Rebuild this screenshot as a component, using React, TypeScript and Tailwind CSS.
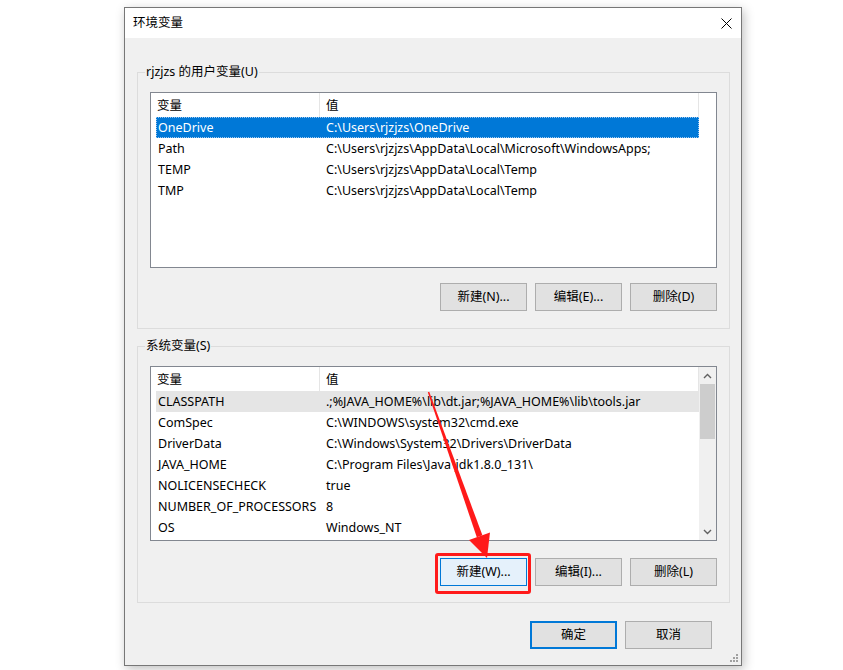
import React from "react";

const font = { fontFamily: '"Noto Sans", "Noto Sans CJK SC", sans-serif' };

type Row = [string, string];

const userRows: Row[] = [
  ["OneDrive", "C:\\Users\\rjzjzs\\OneDrive"],
  ["Path", "C:\\Users\\rjzjzs\\AppData\\Local\\Microsoft\\WindowsApps;"],
  ["TEMP", "C:\\Users\\rjzjzs\\AppData\\Local\\Temp"],
  ["TMP", "C:\\Users\\rjzjzs\\AppData\\Local\\Temp"],
];

const sysRows: Row[] = [
  ["CLASSPATH", ".;%JAVA_HOME%\\lib\\dt.jar;%JAVA_HOME%\\lib\\tools.jar"],
  ["ComSpec", "C:\\WINDOWS\\system32\\cmd.exe"],
  ["DriverData", "C:\\Windows\\System32\\Drivers\\DriverData"],
  ["JAVA_HOME", "C:\\Program Files\\Java\\jdk1.8.0_131\\"],
  ["NOLICENSECHECK", "true"],
  ["NUMBER_OF_PROCESSORS", "8"],
  ["OS", "Windows_NT"],
];

function Header() {
  return (
    <div className="flex h-[24px] w-[548px] shrink-0 text-[12.5px] text-black">
      <div className="flex w-[169px] items-center border-r border-[#e5e5e5] pl-[6px] pt-[2px]">变量</div>
      <div className="flex flex-1 items-center border-r border-[#e5e5e5] pl-[6px] pt-[2px]">值</div>
    </div>
  );
}

function ListRow({ row, mode }: { row: Row; mode: "sel" | "hover" | "none" }) {
  const cls =
    mode === "sel"
      ? "bg-[#0078d7] text-white outline outline-1 outline-dotted outline-offset-[-1px] outline-[#9ec8f0]"
      : mode === "hover"
      ? "bg-[#e5e5e5] text-black"
      : "text-black";
  return (
    <div className={`ml-[5px] flex h-[21px] w-[543px] shrink-0 items-center pt-[2px] text-[12.5px] whitespace-nowrap ${cls}`}>
      <div className="w-[164px] pl-[2px]">{row[0]}</div>
      <div className="flex-1 pl-[6px]">{row[1]}</div>
    </div>
  );
}

function Btn({ label, variant = "normal" }: { label: string; variant?: "normal" | "hot" | "default" }) {
  const cls =
    variant === "hot"
      ? "bg-[#e5f1fb] border border-[#0078d7]"
      : variant === "default"
      ? "bg-[#e1e1e1] border-2 border-[#0078d7]"
      : "bg-[#e1e1e1] border border-[#adadad]";
  return (
    <div className={`flex h-[28px] w-[87px] items-center justify-center text-[12.5px] text-black ${cls}`}>
      {label}
    </div>
  );
}

function Chevron({ up }: { up: boolean }) {
  return (
    <svg width="9" height="6" viewBox="0 0 9 6">
      <path
        d={up ? "M1 5 L4.5 1.5 L8 5" : "M1 1 L4.5 4.5 L8 1"}
        fill="none"
        stroke="#606060"
        strokeWidth="1.4"
      />
    </svg>
  );
}

export default function App() {
  return (
    <div className="relative h-[670px] w-[843px] overflow-hidden bg-white pl-[124px] pt-[7px]" style={font}>
      <div className="relative flex h-[659px] w-[618px] flex-col border border-[#777777] shadow-[2px_3px_10px_rgba(0,0,0,0.25)]">
        {/* title bar */}
        <div className="flex h-[30px] shrink-0 items-center justify-between bg-white pl-[8px] pr-[9px] pt-[1px]">
          <span className="text-[12.5px] text-black">环境变量</span>
          <svg width="11" height="11" viewBox="0 0 11 11">
            <path d="M0.5 0.5 L10.5 10.5 M10.5 0.5 L0.5 10.5" stroke="#000" strokeWidth="1" />
          </svg>
        </div>

        {/* body */}
        <div className="flex flex-1 flex-col bg-[#f0f0f0] pl-[12px]">
          {/* user vars */}
          <fieldset className="mt-[26px] w-[592px] border border-[#dcdcdc] px-[12px] pb-[17px] pt-[12px]">
            <legend className="ml-[-5px] px-[1px] text-[12.5px] leading-[16px] text-black">rjzjzs 的用户变量(U)</legend>
            <div className="flex h-[176px] w-[567px] flex-col border border-[#828790] bg-white">
              <Header />
              {userRows.map((r, i) => (
                <ListRow key={r[0]} row={r} mode={i === 0 ? "sel" : "none"} />
              ))}
            </div>
            <div className="mt-[15px] flex w-[567px] justify-end gap-[8px]">
              <Btn label="新建(N)..." />
              <Btn label="编辑(E)..." />
              <Btn label="删除(D)" />
            </div>
          </fieldset>

          {/* system vars */}
          <fieldset className="mt-[9px] w-[592px] border border-[#dcdcdc] px-[12px] pb-[16px] pt-[12px]">
            <legend className="ml-[-5px] px-[1px] text-[12.5px] leading-[16px] text-black">系统变量(S)</legend>
            <div className="flex h-[175px] w-[567px] border border-[#828790] bg-white">
              <div className="flex w-[548px] flex-col">
                <Header />
                {sysRows.map((r, i) => (
                  <ListRow key={r[0]} row={r} mode={i === 0 ? "hover" : "none"} />
                ))}
              </div>
              <div className="flex w-[17px] flex-col bg-[#f0f0f0]">
                <div className="flex h-[17px] items-center justify-center">
                  <Chevron up />
                </div>
                <div className="ml-[1px] h-[55px] w-[15px] bg-[#cdcdcd]" />
                <div className="flex-1" />
                <div className="flex h-[17px] items-center justify-center">
                  <Chevron up={false} />
                </div>
              </div>
            </div>
            <div className="mt-[17px] flex w-[567px] justify-end gap-[8px]">
              <Btn label="新建(W)..." variant="hot" />
              <Btn label="编辑(I)..." />
              <Btn label="删除(L)" />
            </div>
          </fieldset>

          <div className="mt-[18px] flex w-[575px] justify-end gap-[8px]">
            <Btn label="确定" variant="default" />
            <Btn label="取消" />
          </div>
        </div>

        {/* resize grip */}
        <svg className="absolute bottom-[2px] right-[2px]" width="9" height="9" viewBox="0 0 9 9">
          <rect x="6" y="0" width="2" height="2" fill="#a0a0a0" />
          <rect x="3" y="3" width="2" height="2" fill="#a0a0a0" />
          <rect x="6" y="3" width="2" height="2" fill="#a0a0a0" />
          <rect x="0" y="6" width="2" height="2" fill="#a0a0a0" />
          <rect x="3" y="6" width="2" height="2" fill="#a0a0a0" />
          <rect x="6" y="6" width="2" height="2" fill="#a0a0a0" />
        </svg>
      </div>

      {/* annotation: red box + arrow */}
      <div className="pointer-events-none absolute left-[435px] top-[553px] h-[41px] w-[96px] rounded-[3px] border-[3px] border-[#ff1a1a]" />
      <svg className="pointer-events-none absolute left-0 top-0" width="843" height="670" viewBox="0 0 843 670">
        <polygon
          points="429.2,391.8 427.8,392.2 476.8,537.3 482.4,535.3"
          fill="#ff1a1a"
        />
        <polygon points="487,558 490,532.5 469,540" fill="#ff1a1a" />
      </svg>
    </div>
  );
}
